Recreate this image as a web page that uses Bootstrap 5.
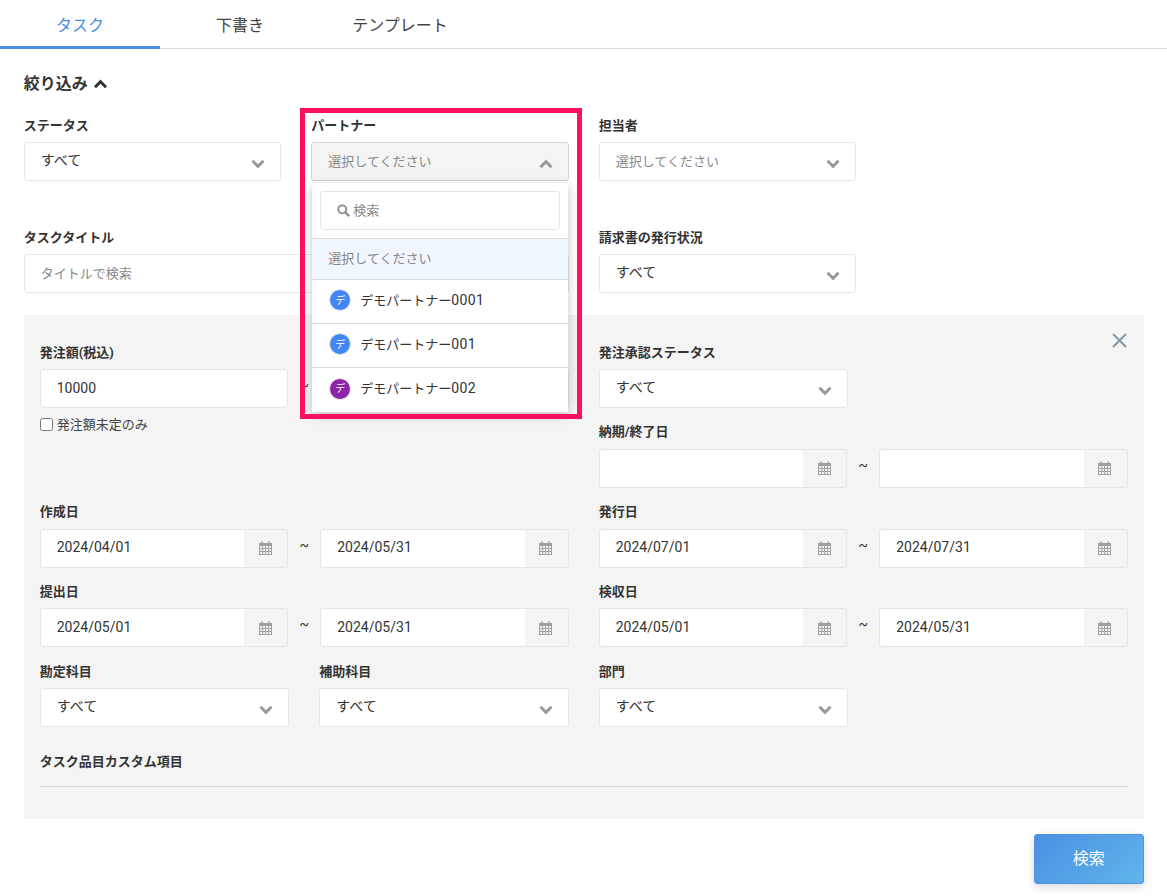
<!DOCTYPE html>
<html lang="ja">
<head>
<meta charset="utf-8">
<title>タスク</title>
<link rel="stylesheet" href="https://cdn.jsdelivr.net/npm/bootstrap@5.3.0/dist/css/bootstrap.min.css">
<style>
html,body{height:896px;overflow:hidden}
body{font-family:Roboto,"Noto Sans CJK JP",sans-serif;font-size:13px;color:#333;background:#fff}
.tabbar{height:49px;border-bottom:1px solid #ddd}
.tabbar .nav-link{width:160px;height:49px;padding:2px 0 0;display:flex;align-items:center;justify-content:center;font-size:16px;color:#444}
.tabbar .nav-link.active{color:#4a90e2;border-bottom:3px solid #4a90e2;padding-top:5px}
.page-body{padding:23px 23.25px 0 23.75px}
.filter-title{font-size:16px;font-weight:700;line-height:24px;color:#333;gap:5px;margin-bottom:19px}
.gut30{--bs-gutter-x:30px;--bs-gutter-y:0}
.fld{margin-bottom:13.75px}
.fld-top{margin-bottom:46px}
.fld-last{margin-bottom:22px}
.fld-label{display:block;font-size:13px;font-weight:700;line-height:20px;margin-bottom:7px;color:#333;position:relative;top:.5px}
.fake-select{height:39px;border:1px solid #e3e8e8;border-radius:3px;background:#fff;padding:0 15px 0 16px;font-size:13px;color:#333;display:flex;align-items:center;justify-content:space-between}
.fake-select>span{position:relative;top:-1px}
.fake-select>span.val-all{font-size:14px}
.fake-select>span.ph{top:0;color:#888}
.fake-select.is-open{background:#f4f4f4;border-color:#d5d5d5}
.fake-select svg{position:relative;top:2px}
.ctl{height:39px;border:1px solid #dfe8e8;border-radius:3px;padding:0 16px 2px;font-size:14px;color:#333;box-shadow:none}
.ctl::placeholder{font-size:13px;color:#888}
.input-group .ctl{border-right:0}
.cal{width:45px;background:#f4f4f4;border:1px solid #dfe8e8;border-left:0;border-radius:0 3px 3px 0;padding:0;justify-content:center}
.tilde{width:32px;flex:none;text-align:center;font-size:14px;position:relative;top:-3px}
.panel-box{background:#f4f4f4;padding:27px 16px 32px;position:relative}
.close-x{position:absolute;right:17px;top:18px;line-height:0;background:none;border:0;padding:0}
.only-check{display:flex;align-items:center;gap:4px;margin-top:-6px;color:#444;font-size:13px;line-height:18px}
.only-check input{margin:0;width:13px;height:13px}
.sub-title{font-size:13px;font-weight:700;line-height:20px;margin-top:11px;padding-bottom:14px;border-bottom:1px solid #d6d8da;color:#333}
.go-btn{width:110px;height:50px;margin-top:15px;color:#fff;font-size:16px;border:1px solid #4f94e4;border-radius:3px;background:linear-gradient(135deg,#4a90e2,#60b5ec);box-shadow:0 3px 8px rgba(0,0,0,.15)}
.go-btn:hover{color:#fff}
.partner-wrap{position:relative}
.red-frame{position:absolute;left:-11px;top:-7px;width:282px;height:311px;border:5px solid #ff0f5c;z-index:3;pointer-events:none}
.drop-menu{position:absolute;left:1px;right:1px;top:68px;background:#fff;border-radius:2px;box-shadow:0 3px 12px rgba(0,0,0,.22);z-index:2;font-size:13px}
.drop-search{height:56px;padding:8px;border-bottom:1px solid #ddd}
.drop-search-box{height:39px;border:1px solid #dfe8e8;border-radius:3px;padding-left:16px;gap:3px;color:#888}
.drop-menu .list-group-item{padding:0 0 3px 17px;border-color:#ddd;height:44px;display:flex;align-items:center;gap:9px;color:#333;font-size:13px;border-radius:0}
.drop-menu .list-group-item.is-none{height:41px;background:#eff6fd;color:#888;padding:0 0 0 16px}
.ava{width:22px;height:22px;border-radius:50%;border:1px solid #eee;color:#fff;font-size:10px;display:flex;align-items:center;justify-content:center;flex:none}
.ava-blue{background:#4285f4}
.ava-purple{background:#8e24aa}
.dig{font-size:14px;letter-spacing:.4px}
</style>
</head>
<body>
<svg width="0" height="0" class="position-absolute">
<defs>
<symbol id="cal" viewBox="0 0 13 14"><path fill="#a0a0a0" d="M0 2h2.2V.5h1.6V2h5.4V.5h1.6V2H13v12H0zM1 5v2h2.2V5zm3.1 0v2h2V5zm2.9 0v2h2V5zm2.9 0v2H12V5zM1 8v2h2.2V8zm3.1 0v2h2V8zm2.9 0v2h2V8zm2.9 0v2H12V8zM1 11v2h2.2v-2zm3.1 0v2h2v-2zm2.9 0v2h2v-2zm2.9 0v2H12v-2z"/></symbol>
<symbol id="chev-d" viewBox="0 0 14 10"><path fill="none" stroke="#999" stroke-width="3" d="M1.5 1.8 7 7.3l5.5-5.5"/></symbol>
<symbol id="chev-u" viewBox="0 0 14 10"><path fill="none" stroke="#999" stroke-width="3" d="M1.5 8.2 7 2.7l5.5 5.5"/></symbol>
</defs>
</svg>

<ul class="nav tabbar">
  <li class="nav-item"><a class="nav-link active" href="#">タスク</a></li>
  <li class="nav-item"><a class="nav-link" href="#">下書き</a></li>
  <li class="nav-item"><a class="nav-link" href="#">テンプレート</a></li>
</ul>

<div class="page-body">
  <div class="filter-title d-flex align-items-center">絞り込み
    <svg width="15" height="10" viewBox="0 0 14 10"><path fill="none" stroke="#333" stroke-width="3" d="M1.5 8.2 7 2.7l5.5 5.5"/></svg>
  </div>

  <div class="row gut30">
    <div class="col-3 fld-top">
      <label class="fld-label">ステータス</label>
      <div class="fake-select"><span class="val-all">すべて</span><svg width="14" height="10"><use href="#chev-d"/></svg></div>
    </div>
    <div class="col-3 fld-top">
      <div class="partner-wrap">
        <div class="red-frame"></div>
        <label class="fld-label">パートナー</label>
        <div class="fake-select is-open"><span class="ph">選択してください</span><svg width="14" height="10"><use href="#chev-u"/></svg></div>
        <div class="drop-menu">
          <div class="drop-search">
            <div class="drop-search-box d-flex align-items-center">
              <svg width="13" height="13" viewBox="0 0 13 13"><circle cx="5.3" cy="5.3" r="4" fill="none" stroke="#888" stroke-width="1.8"/><path stroke="#888" stroke-width="2.2" d="m8.2 8.2 4 4"/></svg>
              <span>検索</span>
            </div>
          </div>
          <ul class="list-group list-group-flush">
            <li class="list-group-item is-none">選択してください</li>
            <li class="list-group-item"><span class="ava ava-blue">デ</span><span>デモパートナー<span class="dig">0001</span></span></li>
            <li class="list-group-item"><span class="ava ava-blue">デ</span><span>デモパートナー<span class="dig">001</span></span></li>
            <li class="list-group-item"><span class="ava ava-purple">デ</span><span>デモパートナー<span class="dig">002</span></span></li>
          </ul>
        </div>
      </div>
    </div>
    <div class="col-3 fld-top">
      <label class="fld-label">担当者</label>
      <div class="fake-select"><span class="ph">選択してください</span><svg width="14" height="10"><use href="#chev-d"/></svg></div>
    </div>
  </div>

  <div class="row gut30">
    <div class="col-6 fld-last">
      <label class="fld-label">タスクタイトル</label>
      <input class="form-control ctl" placeholder="タイトルで検索">
    </div>
    <div class="col-3 fld-last">
      <label class="fld-label">請求書の発行状況</label>
      <div class="fake-select"><span class="val-all">すべて</span><svg width="14" height="10"><use href="#chev-d"/></svg></div>
    </div>
  </div>

  <div class="panel-box">
    <button class="close-x" aria-label="閉じる"><svg width="15" height="15" viewBox="0 0 15 15"><path stroke="#8593a5" stroke-width="1.8" d="m1 1 13 13M14 1 1 14"/></svg></button>

    <div class="row gut30">
      <div class="col-6">
        <div class="fld">
          <label class="fld-label">発注額(税込)</label>
          <div class="d-flex align-items-center">
            <input class="form-control ctl" value="10000">
            <span class="tilde">~</span>
            <input class="form-control ctl">
          </div>
        </div>
        <label class="only-check"><input type="checkbox">発注額未定のみ</label>
      </div>
      <div class="col-6">
        <div class="row gut30">
          <div class="col-6 fld">
            <label class="fld-label">発注承認ステータス</label>
            <div class="fake-select"><span class="val-all">すべて</span><svg width="14" height="10"><use href="#chev-d"/></svg></div>
          </div>
        </div>
        <div class="fld">
          <label class="fld-label">納期/終了日</label>
          <div class="d-flex align-items-center">
            <div class="input-group"><input class="form-control ctl"><span class="input-group-text cal"><svg width="13" height="14"><use href="#cal"/></svg></span></div>
            <span class="tilde">~</span>
            <div class="input-group"><input class="form-control ctl"><span class="input-group-text cal"><svg width="13" height="14"><use href="#cal"/></svg></span></div>
          </div>
        </div>
      </div>
    </div>

    <div class="row gut30">
      <div class="col-6 fld">
        <label class="fld-label">作成日</label>
        <div class="d-flex align-items-center">
          <div class="input-group"><input class="form-control ctl" value="2024/04/01"><span class="input-group-text cal"><svg width="13" height="14"><use href="#cal"/></svg></span></div>
          <span class="tilde">~</span>
          <div class="input-group"><input class="form-control ctl" value="2024/05/31"><span class="input-group-text cal"><svg width="13" height="14"><use href="#cal"/></svg></span></div>
        </div>
      </div>
      <div class="col-6 fld">
        <label class="fld-label">発行日</label>
        <div class="d-flex align-items-center">
          <div class="input-group"><input class="form-control ctl" value="2024/07/01"><span class="input-group-text cal"><svg width="13" height="14"><use href="#cal"/></svg></span></div>
          <span class="tilde">~</span>
          <div class="input-group"><input class="form-control ctl" value="2024/07/31"><span class="input-group-text cal"><svg width="13" height="14"><use href="#cal"/></svg></span></div>
        </div>
      </div>
    </div>

    <div class="row gut30">
      <div class="col-6 fld">
        <label class="fld-label">提出日</label>
        <div class="d-flex align-items-center">
          <div class="input-group"><input class="form-control ctl" value="2024/05/01"><span class="input-group-text cal"><svg width="13" height="14"><use href="#cal"/></svg></span></div>
          <span class="tilde">~</span>
          <div class="input-group"><input class="form-control ctl" value="2024/05/31"><span class="input-group-text cal"><svg width="13" height="14"><use href="#cal"/></svg></span></div>
        </div>
      </div>
      <div class="col-6 fld">
        <label class="fld-label">検収日</label>
        <div class="d-flex align-items-center">
          <div class="input-group"><input class="form-control ctl" value="2024/05/01"><span class="input-group-text cal"><svg width="13" height="14"><use href="#cal"/></svg></span></div>
          <span class="tilde">~</span>
          <div class="input-group"><input class="form-control ctl" value="2024/05/31"><span class="input-group-text cal"><svg width="13" height="14"><use href="#cal"/></svg></span></div>
        </div>
      </div>
    </div>

    <div class="row gut30">
      <div class="col-3 fld">
        <label class="fld-label">勘定科目</label>
        <div class="fake-select"><span class="val-all">すべて</span><svg width="14" height="10"><use href="#chev-d"/></svg></div>
      </div>
      <div class="col-3 fld">
        <label class="fld-label">補助科目</label>
        <div class="fake-select"><span class="val-all">すべて</span><svg width="14" height="10"><use href="#chev-d"/></svg></div>
      </div>
      <div class="col-3 fld">
        <label class="fld-label">部門</label>
        <div class="fake-select"><span class="val-all">すべて</span><svg width="14" height="10"><use href="#chev-d"/></svg></div>
      </div>
    </div>

    <div class="sub-title">タスク品目カスタム項目</div>
  </div>

  <div class="d-flex justify-content-end">
    <button class="btn go-btn">検索</button>
  </div>
</div>
<script src="https://cdn.jsdelivr.net/npm/bootstrap@5.3.0/dist/js/bootstrap.bundle.min.js"></script>
</body>
</html>
